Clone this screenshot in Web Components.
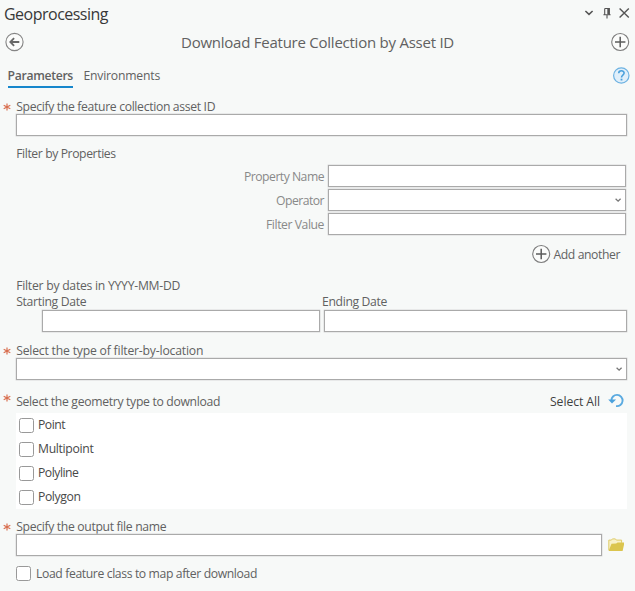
<!DOCTYPE html>
<html lang="en">
<head>
<meta charset="utf-8">
<title>Geoprocessing</title>
<style>
html,body{margin:0;height:100%;overflow:hidden;background:#f7f9f8}
body{font-family:"Open Sans","Noto Sans",sans-serif;font-size:12.2px;color:#616161}
</style>
</head>
<body>
<gp-pane></gp-pane>
<script>
const define = (name, html, setup) => customElements.define(name, class extends HTMLElement {
  connectedCallback() {
    if (this.shadowRoot) return;
    this.attachShadow({mode: 'open'}).innerHTML = html;
    if (setup) setup(this, this.shadowRoot);
  }
});

// Single line of text whose tracking is adjusted to fill the width "w".
define('gp-text', `<style>:host{display:block;white-space:pre;line-height:16px;flex:none}span{display:inline-block}</style><span><slot></slot></span>`, (el, root) => {
  const span = root.querySelector('span');
  const w = +el.getAttribute('w');
  const n = el.textContent.length;
  if (w) {
    span.style.letterSpacing = ((w - span.getBoundingClientRect().width) / n).toFixed(3) + 'px';
    el.style.width = w + 'px';
  }
});

const ICONS = {
  back: [20, '<circle cx="10.5" cy="10" r="8.6" fill="#fbfcfb" stroke="#858585" stroke-width="1.1"/><path d="M15.3 10H6.5M10.1 6.1 6.3 10l3.8 3.9" fill="none" stroke="#686868" stroke-width="1.8"/>'],
  plus: [20, '<circle cx="10.2" cy="10" r="8.5" fill="#fbfcfb" stroke="#7d7d7d" stroke-width="1.1"/><path d="M10.2 4.8v10.4M5 10h10.4" fill="none" stroke="#5c5c5c" stroke-width="1.5"/>'],
  help: [18, '<circle cx="9.3" cy="8.5" r="7.7" fill="#e0effa" stroke="#6db2e2" stroke-width="1.2"/><path d="M6.7 6.2C6.8 3 12.1 3 12.1 6.1 12.1 8.2 9.5 8.2 9.5 10.5" fill="none" stroke="#4ba1dc" stroke-width="1.6"/><path d="M8.6 11.7h1.8v1.8H8.6z" fill="#4ba1dc"/>'],
  down: [10, '<path d="m1.4 3 3.6 3.3L8.6 3" fill="none" stroke="#555" stroke-width="1.6"/>'],
  pin: [12, '<path d="M3.7 1.5h4.6v5.7M3.7 1.5v5.7M2.4 7.7h7.2M6 7.9v3.6" fill="none" stroke="#555" stroke-width="1.1"/><path d="M6.3 1.2h2.3v6.3H6.3z" fill="#555"/>'],
  close: [12, '<path d="m1.6 1.4 9.2 9.2M10.8 1.4l-9.2 9.2" fill="none" stroke="#555" stroke-width="1.4"/>'],
  caret: [8, '<path d="m1.6 2.7 2.5 2.4 2.5-2.4" fill="none" stroke="#777" stroke-width="1.3"/>'],
  reset: [16, '<path d="M3.4 7.7A5.6 5.6 0 1 1 8.1 13" fill="none" stroke="#5aaae0" stroke-width="1.9"/><path d="M.2 6.4h7.9L4 10.6z" fill="#4ba1dc"/>'],
  folder: [16, '<path d="M.8 13.2V3.1h2.6l1-1.2h3l1 1.2h5.2v2.7" fill="#f8f1c9" stroke="#dfcc68" stroke-width="1"/><path d="M.6 14 3.5 6.8l4.7-.2 1.4-1.1h6.9L14.6 14z" fill="#dbc54e"/>'],
  star: [8, '<path d="M4 .4v7.2M.7 2.3l6.6 3.4M7.3 2.3.7 5.7" fill="none" stroke="#d96f50" stroke-width="1.2"/>']
};
define('gp-icon', `<style>:host{display:block;flex:none}svg{display:block}</style>`, (el, root) => {
  const [s, body] = ICONS[el.getAttribute('name')];
  root.innerHTML += `<svg width="${s}" height="${s}" viewBox="0 0 ${s} ${s}">${body}</svg>`;
});

define('gp-field', `<style>:host{display:flex;box-sizing:border-box;height:22px;background:#fff;border:1px solid #aaa;align-items:center;justify-content:flex-end;padding-right:3px;box-shadow:0 0 0 .4px #d2d2d2}</style><slot></slot>`);

define('gp-check', `<style>:host{display:flex;align-items:center;gap:4px;height:24px}i{box-sizing:border-box;width:15px;height:15px;border:1px solid #999;border-radius:2.5px;background:#fff;flex:none}</style><i></i><slot></slot>`);

// Label line with an optional required marker in the left gutter.
define('gp-label', `<style>:host{display:grid;grid-template-columns:13.2px auto 1fr;height:16px;align-items:start}gp-icon{padding:var(--star-top,5px) 0 0 0}::slotted(*){margin-top:var(--text-top,1px)}</style><span></span><slot></slot>`, (el, root) => {
  if (el.hasAttribute('required')) root.querySelector('span').innerHTML = '<gp-icon name="star"></gp-icon>';
});

define('gp-header', `<style>
:host{display:block}
.bar{display:flex;height:28px;align-items:center;padding:0 5px 0 4px}
.bar gp-text{font-size:16px;line-height:22px;color:#383838}
.tools{display:flex;align-items:center;gap:5px;margin-left:auto;padding-bottom:2px}
.tools gp-icon:first-child{margin-right:2px}
.title{display:flex;height:28px;align-items:center;justify-content:space-between;padding:0 5px 0 4px}
.title gp-text{font-size:15px;line-height:22px;margin-left:1px}
.tabs{display:flex;height:39px;align-items:center;padding:0 5px 0 7.5px;gap:10.5px}
.tab{height:24px;box-sizing:border-box;padding-top:4px}
.on{border-bottom:2px solid #1787cc;font-weight:600}
.tabs gp-icon{margin-left:auto}
</style>
<div class="bar"><gp-text w="104">Geoprocessing</gp-text><div class="tools"><gp-icon name="down"></gp-icon><gp-icon name="pin"></gp-icon><gp-icon name="close"></gp-icon></div></div>
<div class="title"><gp-icon name="back"></gp-icon><gp-text w="273">Download Feature Collection by Asset ID</gp-text><gp-icon name="plus"></gp-icon></div>
<div class="tabs"><div class="tab on"><gp-text w="65.5">Parameters</gp-text></div><div class="tab"><gp-text w="76.5">Environments</gp-text></div><gp-icon name="help"></gp-icon></div>`);

define('gp-properties', `<style>
:host{display:grid;grid-template-columns:1fr 298px;column-gap:4px;row-gap:2px;align-items:center;color:#898989}
gp-text{justify-self:end;padding-top:2px}
.add{grid-column:1/3;height:27px;box-sizing:border-box;display:flex;justify-content:flex-end;align-items:center;gap:3px;padding:7px 6px 0 0;color:#626262}
</style>
<gp-text w="80">Property Name</gp-text><gp-field></gp-field>
<gp-text w="48">Operator</gp-text><gp-field><gp-icon name="caret"></gp-icon></gp-field>
<gp-text w="58">Filter Value</gp-text><gp-field></gp-field>
<div class="add"><gp-icon name="plus"></gp-icon><gp-text w="66.5">Add another</gp-text></div>`);

define('gp-dates', `<style>
:host{display:grid;grid-template-columns:26px 278px 307px;height:38px;grid-template-rows:16px 22px}
.s{grid-column:1/3;margin-left:.2px}.e{margin-left:2px}
.f{grid-row:2;grid-column:2}.g{grid-row:2;grid-column:3;margin-left:4px}
</style>
<gp-text class="s" w="70">Starting Date</gp-text><gp-text class="e" w="65">Ending Date</gp-text>
<gp-field class="f"></gp-field><gp-field class="g"></gp-field>`);

define('gp-geometry', `<style>
:host{display:block}
.head{display:flex;align-items:center;height:23px}
gp-label{--star-top:0px;--text-top:0px;margin-top:1px}
.all{color:#3f3f3f;margin-left:auto;padding-right:8px;margin-top:1px}
.head>gp-icon{margin:0 3px 2px 0}
.list{background:#fff;margin-left:13px;padding-left:3px;height:96px;color:#484848}
</style>
<div class="head"><gp-label required><gp-text w="204">Select the geometry type to download</gp-text></gp-label><gp-text class="all" w="50">Select All</gp-text><gp-icon name="reset"></gp-icon></div>
<div class="list"><gp-check><gp-text w="27">Point</gp-text></gp-check><gp-check><gp-text w="55.5">Multipoint</gp-text></gp-check><gp-check><gp-text w="40.5">Polyline</gp-text></gp-check><gp-check><gp-text w="42.5">Polygon</gp-text></gp-check></div>`);

define('gp-pane', `<style>
:host{display:block;width:635px;height:591px;box-sizing:border-box;background:#f7f9f8}
.form{display:flex;flex-direction:column;padding:3px 8px 0 3px}
.in{margin-left:13px}
.out{display:flex;margin-left:13px;gap:6px;align-items:center}
.out gp-field{width:586px}
gp-text.in{margin-left:13.2px}
.in.a{margin-top:10px}.p{margin:3px 1px 0 0}.in.d{margin-top:14px}.l{margin-top:10px}
.g{margin-top:10px}.o{margin-top:9px}.load{margin-top:5px;margin-left:13px}
gp-check gp-text{margin:1px 0 0 1px}
</style>
<gp-header></gp-header>
<div class="form">
<gp-label required><gp-text w="199">Specify the feature collection asset ID</gp-text></gp-label>
<gp-field class="in"></gp-field>
<gp-text class="in a" w="99.5">Filter by Properties</gp-text>
<gp-properties class="p"></gp-properties>
<gp-text class="in d" w="164">Filter by dates in YYYY-MM-DD</gp-text>
<gp-dates class="in"></gp-dates>
<gp-label class="l" required><gp-text w="187">Select the type of filter-by-location</gp-text></gp-label>
<gp-field class="in"><gp-icon name="caret"></gp-icon></gp-field>
<gp-geometry class="g"></gp-geometry>
<gp-label class="o" required><gp-text w="150">Specify the output file name</gp-text></gp-label>
<div class="out"><gp-field></gp-field><gp-icon name="folder"></gp-icon></div>
<gp-check class="load"><gp-text w="221">Load feature class to map after download</gp-text></gp-check>
</div>`);
</script>
</body>
</html>
